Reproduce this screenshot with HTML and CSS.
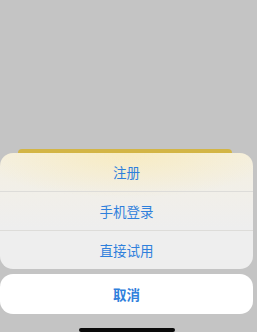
FILE: index.html
```html
<!DOCTYPE html>
<html lang="zh">
<head>
<meta charset="utf-8">
<link rel="stylesheet" href="styles.css">
</head>
<body>
  <div class="backdrop-bar"></div>
  <div class="sheet">
    <div class="group">
      <div class="row">注册</div>
      <div class="row sep">手机登录</div>
      <div class="row sep">直接试用</div>
    </div>
    <div class="cancel">取消</div>
  </div>
  <div class="home-area"><div class="home-indicator"></div></div>
</body>
</html>
```

FILE: styles.css
```css
html, body {
  margin: 0;
  padding: 0;
}
body {
  width: 257px;
  height: 332px;
  overflow: hidden;
  background: #c4c4c4;
  display: flex;
  flex-direction: column;
  justify-content: flex-end;
  font-family: "Noto Sans CJK SC", "Noto Sans", sans-serif;
}
.backdrop-bar {
  height: 4px;
  margin: 0 25px 0 18px;
  background: #d3b545;
  border-radius: 4px 4px 0 0;
}
.sheet {
  width: 253px;
  display: flex;
  flex-direction: column;
  gap: 5px;
}
.group {
  border-radius: 13px;
  overflow: hidden;
  background:
    radial-gradient(ellipse 150px 45px at 50% 0%, rgba(250, 232, 170, 0.55), rgba(250, 232, 170, 0) 100%),
    linear-gradient(180deg, #f5f0e0 0px, #f1efe9 40px, #eeeeee 75px, #eeeeee 116px);
}
.row {
  height: 38px;
  display: flex;
  align-items: center;
  justify-content: center;
  font-size: 13.5px;
  color: #2f80dc;
}
.row.sep {
  border-top: 1px solid #dddcd9;
}
.cancel {
  height: 40px;
  border-radius: 13px;
  background: #ffffff;
  display: flex;
  align-items: center;
  justify-content: center;
  font-size: 13.5px;
  font-weight: 700;
  color: #2f80dc;
}
.home-area {
  height: 18px;
  display: flex;
  justify-content: center;
  align-items: flex-start;
}
.home-indicator {
  margin-top: 14px;
  margin-left: -4px;
  width: 96px;
  height: 4px;
  border-radius: 2px;
  background: #0a0a0a;
}
```
